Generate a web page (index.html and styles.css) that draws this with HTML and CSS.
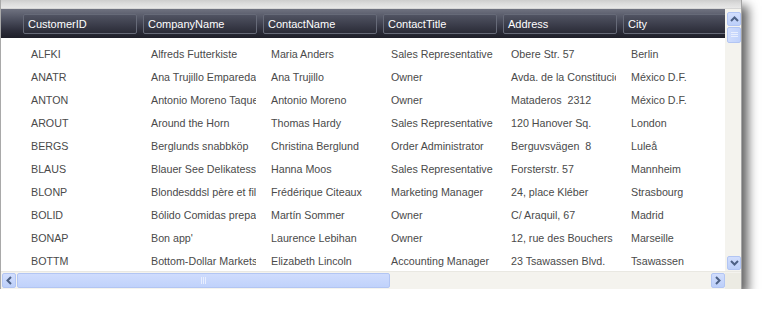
FILE: index.html
```html
<!DOCTYPE html>
<html lang="en">
<head>
<meta charset="utf-8">
<title>Customers</title>
<link rel="stylesheet" href="styles.css">
</head>
<body>
<div class="grid">
  <div class="grid-top"></div>
  <div class="grid-main">
    <div class="viewport">
      <div class="header">
        <div class="hcell">CustomerID</div>
        <div class="hcell">CompanyName</div>
        <div class="hcell">ContactName</div>
        <div class="hcell">ContactTitle</div>
        <div class="hcell">Address</div>
        <div class="hcell">City</div>
      </div>
      <div class="rows">
        <div class="row"><span>ALFKI</span><span>Alfreds Futterkiste</span><span>Maria Anders</span><span>Sales Representative</span><span>Obere Str. 57</span><span>Berlin</span></div>
        <div class="row"><span>ANATR</span><span>Ana Trujillo Emparedados y helados</span><span>Ana Trujillo</span><span>Owner</span><span>Avda. de la Constitución 2222</span><span>México D.F.</span></div>
        <div class="row"><span>ANTON</span><span>Antonio Moreno Taquería</span><span>Antonio Moreno</span><span>Owner</span><span>Mataderos  2312</span><span>México D.F.</span></div>
        <div class="row"><span>AROUT</span><span>Around the Horn</span><span>Thomas Hardy</span><span>Sales Representative</span><span>120 Hanover Sq.</span><span>London</span></div>
        <div class="row"><span>BERGS</span><span>Berglunds snabbköp</span><span>Christina Berglund</span><span>Order Administrator</span><span>Berguvsvägen  8</span><span>Luleå</span></div>
        <div class="row"><span>BLAUS</span><span>Blauer See Delikatessen</span><span>Hanna Moos</span><span>Sales Representative</span><span>Forsterstr. 57</span><span>Mannheim</span></div>
        <div class="row"><span>BLONP</span><span>Blondesddsl père et fils</span><span>Frédérique Citeaux</span><span>Marketing Manager</span><span>24, place Kléber</span><span>Strasbourg</span></div>
        <div class="row"><span>BOLID</span><span>Bólido Comidas preparadas</span><span>Martín Sommer</span><span>Owner</span><span>C/ Araquil, 67</span><span>Madrid</span></div>
        <div class="row"><span>BONAP</span><span>Bon app'</span><span>Laurence Lebihan</span><span>Owner</span><span>12, rue des Bouchers</span><span>Marseille</span></div>
        <div class="row"><span>BOTTM</span><span>Bottom-Dollar Markets</span><span>Elizabeth Lincoln</span><span>Accounting Manager</span><span>23 Tsawassen Blvd.</span><span>Tsawassen</span></div>
      </div>
    </div>
    <div class="vscroll">
      <div class="sbtn vbtn">
        <svg width="9" height="6" viewBox="0 0 9 6"><path d="M1 5 L4.5 1.5 L8 5" fill="none" stroke="#4d6185" stroke-width="2"/></svg>
      </div>
      <div class="vthumb">
        <svg width="7" height="6" viewBox="0 0 7 6"><path d="M0 0.5H7M0 2.5H7M0 4.5H7" stroke="#e8eefe" stroke-width="1"/></svg>
      </div>
      <div class="vtrack"></div>
      <div class="sbtn vbtn">
        <svg width="9" height="6" viewBox="0 0 9 6"><path d="M1 1 L4.5 4.5 L8 1" fill="none" stroke="#4d6185" stroke-width="2"/></svg>
      </div>
    </div>
  </div>
  <div class="hscroll">
    <div class="sbtn hbtn">
      <svg width="6" height="9" viewBox="0 0 6 9"><path d="M5 1 L1.5 4.5 L5 8" fill="none" stroke="#4d6185" stroke-width="2"/></svg>
    </div>
    <div class="hthumb">
      <svg width="6" height="7" viewBox="0 0 6 7"><path d="M0.5 0V7M2.5 0V7M4.5 0V7" stroke="#e8eefe" stroke-width="1"/></svg>
    </div>
    <div class="htrack"></div>
    <div class="sbtn hbtn">
      <svg width="6" height="9" viewBox="0 0 6 9"><path d="M1 1 L4.5 4.5 L1 8" fill="none" stroke="#4d6185" stroke-width="2"/></svg>
    </div>
    <div class="corner"></div>
  </div>
</div>
</body>
</html>
```

FILE: styles.css
```css
html, body {
  margin: 0;
  padding: 0;
  background: #ffffff;
}

body {
  font-family: "Liberation Sans", Arial, sans-serif;
  font-size: 10.7px;
}

.grid {
  box-sizing: border-box;
  width: 742px;
  height: 289px;
  border-left: 1px solid #a9a9a9;
  border-right: 1px solid #a4a4a4;
  border-bottom: 1px solid #a4a4a4;
  background: #ffffff;
  box-shadow: 6px 6px 10px rgba(0, 0, 0, 0.62);
  display: flex;
  flex-direction: column;
}

.grid-top {
  height: 9px;
  flex: none;
  background: linear-gradient(#cdcdcd 0, #dadada 3px, #e8e8e8 8px, #c4c4c4 9px);
}

.grid-main {
  display: flex;
  height: 262px;
  flex: none;
}

.viewport {
  width: 724px;
  overflow: hidden;
  flex: none;
}

.header {
  height: 29px;
  padding-left: 19px;
  display: flex;
  align-items: center;
  background: linear-gradient(#6f7280 0, #4e5160 35%, #2c2d3a 75%, #1d1e28 100%);
}

.hcell {
  box-sizing: border-box;
  flex: none;
  width: 114px;
  height: 20px;
  margin: 0 3px;
  padding-left: 4px;
  line-height: 18px;
  font-size: 11px;
  color: #ffffff;
  white-space: nowrap;
  overflow: hidden;
  border: 1px solid #666a78;
  border-radius: 2px;
  background: linear-gradient(#505362, #2a2b37);
}

.rows {
  padding-top: 5px;
  padding-left: 19px;
}

.row {
  display: flex;
  height: 23px;
  line-height: 23px;
  color: #4a4a4a;
}

/* each cell clips its text 4px short of the next column */
.row span {
  box-sizing: border-box;
  flex: none;
  width: 116px;
  margin-right: 4px;
  padding-left: 11px;
  white-space: pre;
  overflow: hidden;
}

.vscroll {
  box-sizing: border-box;
  width: 16px;
  flex: none;
  padding: 3px 0 1px 2px;
  background: #f4f3ee;
  display: flex;
  flex-direction: column;
}

.sbtn {
  box-sizing: border-box;
  flex: none;
  display: flex;
  align-items: center;
  justify-content: center;
  border: 1px solid #b2c5f3;
  border-radius: 2px;
  background: linear-gradient(#d2defd, #bccff9);
}

.vbtn {
  width: 14px;
  height: 14px;
}

.vthumb {
  box-sizing: border-box;
  flex: none;
  width: 14px;
  height: 16px;
  margin-top: 1px;
  display: flex;
  align-items: center;
  justify-content: center;
  border: 1px solid #b2c5f3;
  border-radius: 2px;
  background: linear-gradient(90deg, #cfdcfd, #c0d2fb);
}

.vtrack {
  flex: 1;
}

.hscroll {
  height: 16px;
  flex: none;
  display: flex;
  align-items: flex-start;
  padding-top: 1px;
  background: #f4f3ee;
  border-top: 1px solid #e9e8e2;
}

.hbtn {
  width: 14px;
  height: 15px;
  margin-left: 1px;
}

.hthumb {
  box-sizing: border-box;
  flex: none;
  width: 373px;
  height: 15px;
  margin-left: 1px;
  display: flex;
  align-items: center;
  justify-content: center;
  border: 1px solid #b2c5f3;
  border-radius: 2px;
  background: linear-gradient(#cfdcfd, #c0d2fb);
}

.htrack {
  flex: 1;
}

.corner {
  width: 16px;
  height: 16px;
  flex: none;
  background: #ecebe3;
}
```
